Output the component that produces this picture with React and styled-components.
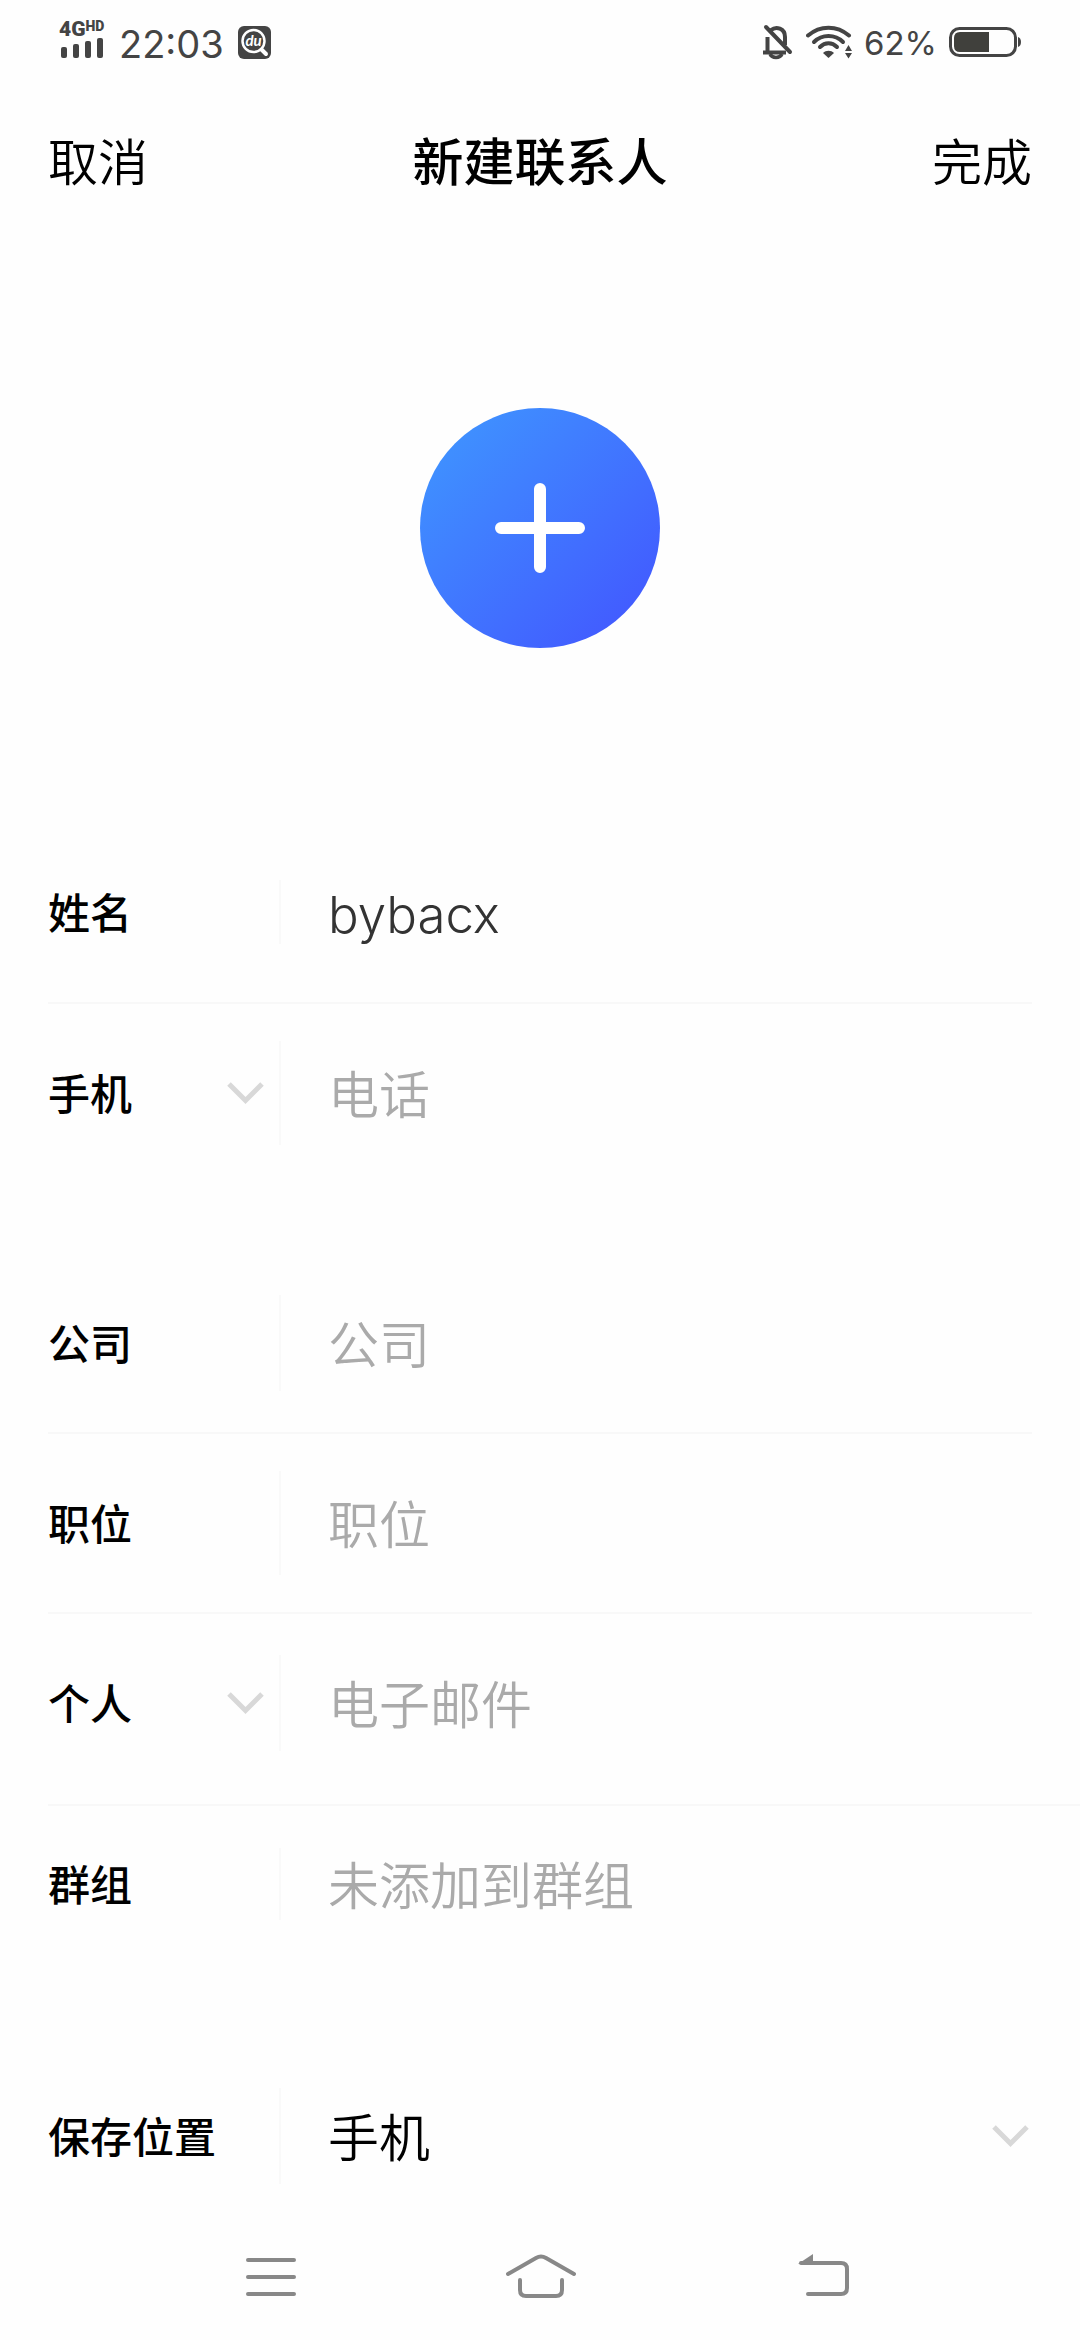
import React, { useState } from 'react'
import styled, { createGlobalStyle } from 'styled-components'

const GlobalStyle = createGlobalStyle`
  * {
    box-sizing: border-box;
  }

  body {
    margin: 0;
    background: #fefefe;
    color: #000;
    font-family: Inter, 'Noto Sans CJK SC', sans-serif;
  }

  button, input, select {
    margin: 0;
    padding: 0;
    border: 0;
    background: none;
    color: inherit;
    font: inherit;
    outline: none;
  }
`

const Page = styled.div`
  display: flex;
  flex-direction: column;
  min-height: 100vh;
`

const StatusBar = styled.div`
  display: flex;
  align-items: center;
  justify-content: space-between;
  height: 84px;
  padding: 0 59px;
  color: #444;
`

const StatusGroup = styled.div`
  display: flex;
  align-items: center;
  gap: ${p => p.$gap}px;
`

const Signal = styled.div`
  display: flex;
  flex-direction: column;
  width: 46px;
  padding-bottom: 4px;
`

const Network = styled.div`
  display: flex;
  align-items: flex-start;
  height: 16px;
  font: 900 21px/16px Roboto, sans-serif;
`

const NetworkTag = styled.span`
  font-size: 14px;
  line-height: 11px;
`

const Clock = styled.time`
  padding-top: 4px;
  font-size: 38px;
  line-height: 48px;
`

const Percent = styled.span`
  padding-top: 2px;
  font-size: 33px;
  line-height: 40px;
`

const Header = styled.header`
  display: grid;
  grid-template-columns: 1fr auto 1fr;
  align-items: center;
  height: 158px;
  padding: 0 48px;
  font-size: 50px;
  line-height: 60px;
`

const Title = styled.h1`
  margin: 0;
  font-size: 51px;
  font-weight: 450;
`

const HeaderButton = styled.button`
  justify-self: ${p => p.$side};
  font-weight: 350;
`

const Photo = styled.div`
  display: flex;
  justify-content: center;
  padding: 166px 0 174px;
`

const PhotoButton = styled.button`
  display: flex;
  align-items: center;
  justify-content: center;
  width: 240px;
  height: 240px;
  border-radius: 50%;
  background: linear-gradient(135deg, #3f92ff 10%, #425aff 90%);
`

const Form = styled.form`
  display: flex;
  flex-direction: column;
  gap: 72px;
`

const Section = styled.div`
  display: flex;
  flex-direction: column;
`

const Row = styled.div`
  display: flex;
  align-items: center;
  height: ${p => p.$height || 180}px;
  margin: 0 ${p => (p.$bleed ? 0 : 48)}px 0 48px;
  padding-bottom: ${p => p.$bottom || 0}px;
  border-bottom: ${p => (p.$line ? '2px solid #f8f8f8' : '0')};
`

const LabelCell = styled.div`
  display: flex;
  align-items: center;
  justify-content: space-between;
  width: 233px;
  height: ${p => p.$height}px;
  padding-right: 12px;
  border-right: 2px solid #f9f9f9;
`

const Label = styled.label`
  padding-top: 4px;
  font-size: 42px;
  line-height: 56px;
  font-weight: 450;
`

const TypeSelect = styled.select`
  flex: 1;
  appearance: none;
  padding-top: 4px;
  font-size: 42px;
  line-height: 56px;
  font-weight: 450;
`

const Input = styled.input`
  flex: 1;
  min-width: 0;
  height: 80px;
  padding: 4px 0 0 47px;
  font-size: 51px;
  font-weight: 300;
  color: #333;

  &::placeholder {
    color: #aaa;
    font-weight: 350;
    opacity: 1;
  }
`

const StorageSelect = styled.select`
  flex: 1;
  height: 80px;
  padding: 4px 0 0 47px;
  appearance: none;
  font-size: 51px;
  font-weight: 350;
`

const NavBar = styled.nav`
  display: flex;
  align-items: center;
  justify-content: space-around;
  flex: 1;
  min-height: 102px;
  padding: 0 12.5% 12px;
`

const NavButton = styled.button`
  display: flex;
  justify-content: center;
  width: 80px;
`

const Chevron = () => (
  <svg width="40" height="24" viewBox="0 0 40 24" fill="none" stroke="#d8d8d8" strokeWidth="5">
    <path d="M2 3 L18.500 19.500 L35 3" />
  </svg>
)

const SignalBars = () => (
  <svg width="46" height="22" viewBox="0 0 46 22" fill="currentColor">
    <rect x="2" y="10" width="6" height="11" rx="2" />
    <rect x="14" y="7" width="6" height="14" rx="2" />
    <rect x="26" y="4" width="6" height="17" rx="2" />
    <rect x="38" y="1" width="6" height="20" rx="2" />
  </svg>
)

const SearchBadge = () => (
  <svg width="33" height="33" viewBox="0 0 33 33">
    <rect width="33" height="33" rx="6" fill="#444" />
    <circle cx="15.500" cy="15" r="11" fill="none" stroke="#fff" strokeWidth="2.500" />
    <path d="M23.500 23.500 L28 28" stroke="#fff" strokeWidth="4" strokeLinecap="round" />
    <text x="15.500" y="20" textAnchor="middle" fill="#fff" fontSize="15" fontStyle="italic" fontWeight="700" fontFamily="Lato">du</text>
  </svg>
)

const MutedBell = () => (
  <svg width="32" height="36" viewBox="0 0 32 36" fill="none" stroke="currentColor" strokeWidth="4">
    <path d="M1 28.500 H24 M5.500 28 V13 M9 6 C14 2 23 4 23 13 V21" />
    <path d="M8 30 C10 34.500 18 34.500 20 30" strokeWidth="3.500" />
    <path d="M4 3 L28 28" strokeLinecap="round" />
  </svg>
)

const Wifi = () => (
  <svg width="46" height="34" viewBox="0 0 46 34" fill="none" stroke="currentColor" strokeWidth="4" strokeLinecap="round">
    <path d="M2 10.500 C14 0 31 0 43 10.500" />
    <path d="M8 17 C16 9 29 9 37 17" />
    <path d="M14 22 C19 17 26 17 31 22" />
    <path d="M17 28 C20 25 25 25 28 28 L22.500 33 Z" fill="currentColor" stroke="none" />
    <path d="M39 26 L42.500 20 L46 26 Z M39 28 L42.500 33.500 L46 28 Z" fill="currentColor" stroke="none" />
  </svg>
)

const Battery = () => (
  <svg width="72" height="30" viewBox="0 0 72 30">
    <rect x="1.500" y="1.500" width="65" height="27" rx="9" fill="none" stroke="#444" strokeWidth="3" />
    <path d="M11 5 H40 V25 H11 Q5 25 5 19 V11 Q5 5 11 5 Z" fill="#40403c" />
    <path d="M69 10 Q72 11 72 15 Q72 19 69 20 Z" fill="#444" />
  </svg>
)

const options = {
  phone: ['手机'],
  email: ['个人'],
  storage: ['手机'],
}

const Field = ({ id, label, types, value, placeholder, divider = 96, onChange, ...row }) => (
  <Row {...row}>
    <LabelCell $height={divider}>
      {types
        ? <TypeSelect aria-label={`${placeholder}类型`}>{types.map(t => <option key={t}>{t}</option>)}</TypeSelect>
        : <Label htmlFor={id}>{label}</Label>}
      {types && <Chevron />}
    </LabelCell>
    <Input
      id={id}
      aria-label={types ? placeholder : undefined}
      placeholder={placeholder}
      value={value}
      onChange={onChange}
    />
  </Row>
)

const App = () => {
  const [name, setName] = useState('bybacx')

  return (
    <Page>
      <GlobalStyle />
      <StatusBar>
        <StatusGroup $gap={14}>
          <Signal>
            <Network>4G<NetworkTag>HD</NetworkTag></Network>
            <SignalBars />
          </Signal>
          <Clock>22:03</Clock>
          <SearchBadge />
        </StatusGroup>
        <StatusGroup $gap={12}>
          <MutedBell />
          <Wifi />
          <Percent>62%</Percent>
          <Battery />
        </StatusGroup>
      </StatusBar>

      <Header>
        <HeaderButton $side="start">取消</HeaderButton>
        <Title>新建联系人</Title>
        <HeaderButton $side="end">完成</HeaderButton>
      </Header>

      <Photo>
        <PhotoButton aria-label="添加照片">
          <svg width="90" height="90" viewBox="0 0 90 90" stroke="#fff" strokeWidth="12" strokeLinecap="round">
            <path d="M45 6 V84 M6 45 H84" />
          </svg>
        </PhotoButton>
      </Photo>

      <Form onSubmit={e => e.preventDefault()}>
        <Section>
          <Field id="name" label="姓名" value={name} onChange={e => setName(e.target.value)} divider={64} $height={182} $line />
          <Field id="phone" types={options.phone} placeholder="电话" divider={104} $height={178} />
        </Section>
        <Section>
          <Field id="company" label="公司" placeholder="公司" $line />
          <Field id="position" label="职位" placeholder="职位" divider={104} $line />
          <Field id="email" types={options.email} placeholder="电子邮件" $height={192} $bottom={12} $line $bleed />
          <Field id="group" label="群组" placeholder="未添加到群组" divider={72} $height={168} $bottom={12} />
        </Section>
        <Section>
          <Row>
            <LabelCell $height={96}>
              <Label htmlFor="storage">保存位置</Label>
            </LabelCell>
            <StorageSelect id="storage">
              {options.storage.map(s => <option key={s}>{s}</option>)}
            </StorageSelect>
            <Chevron />
          </Row>
        </Section>
      </Form>

      <NavBar>
        <NavButton aria-label="菜单">
          <svg width="80" height="50" viewBox="0 0 80 50" stroke="#888" strokeWidth="4" strokeLinecap="round">
            <path d="M18 8 H64 M18 25 H64 M18 42 H64" />
          </svg>
        </NavButton>
        <NavButton aria-label="主页">
          <svg width="80" height="50" viewBox="0 0 80 50" fill="none" stroke="#888" strokeWidth="4" strokeLinecap="round" strokeLinejoin="round">
            <path d="M8 22 L36 6 Q41 3 46 6 L74 22" />
            <path d="M20 28 V38 Q20 44 26 44 H56 Q62 44 62 38 V28" />
          </svg>
        </NavButton>
        <NavButton aria-label="返回">
          <svg width="80" height="50" viewBox="0 0 80 50" fill="none" stroke="#888" strokeWidth="4" strokeLinecap="round">
            <path d="M31 11 H71 Q77 11 77 17 V36 Q77 42 71 42 H38" />
            <path d="M28 12 L43 2 V12 Z" fill="#888" stroke="none" />
          </svg>
        </NavButton>
      </NavBar>
    </Page>
  )
}

export default App
